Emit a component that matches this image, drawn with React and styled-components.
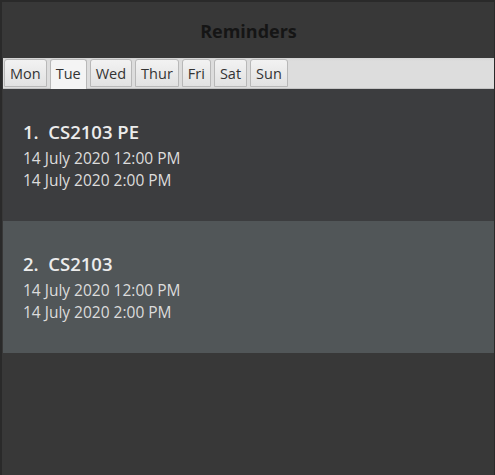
import styled, { createGlobalStyle } from "styled-components";
import { useState } from "react";

const GlobalStyle = createGlobalStyle`
  html, body {
    margin: 0;
    padding: 0;
    background: #383838;
  }
  #root {
    height: 475px;
  }
`;

const Window = styled.div`
  box-sizing: border-box;
  height: 475px;
  width: 495px;
  display: flex;
  flex-direction: column;
  background: #383838;
  border-left: 2px solid #2a2a2a;
  border-top: 2px solid #2a2a2a;
  border-right: 1px solid #2a2a2a;
  padding-left: 1px;
  font-family: "Open Sans", "Noto Sans", sans-serif;
`;

const Title = styled.div`
  height: 56px;
  padding-top: 2px;
  box-sizing: border-box;
  display: flex;
  align-items: center;
  justify-content: center;
  font-size: 18px;
  font-weight: 700;
  color: #151515;
`;

const TabBar = styled.div`
  height: 31px;
  box-sizing: border-box;
  display: flex;
  align-items: flex-end;
  gap: 3px;
  padding: 0 0 1px 1px;
  background: linear-gradient(#d4d4d4, #dddddd 3px);
  border-bottom: 1px solid #c4c4c4;
`;

const Tab = styled.button`
  box-sizing: border-box;
  height: ${(p) => (p.$active ? "30px" : "28px")};
  margin-bottom: ${(p) => (p.$active ? "-2px" : "0")};
  padding: ${(p) => (p.$active ? "0 5px 2px" : "0 5px")};
  font-family: "Open Sans", "Noto Sans", sans-serif;
  font-size: 14.5px;
  color: #333;
  border: 1px solid #b8b8b8;
  border-bottom: ${(p) => (p.$active ? "none" : "1px solid #b8b8b8")};
  border-radius: 3px 3px 0 0;
  background: ${(p) =>
    p.$active ? "#f4f4f4" : "linear-gradient(#f2f2f2, #e2e2e2)"};
  cursor: pointer;
  outline: none;
`;

const List = styled.div`
  display: flex;
  flex-direction: column;
`;

const Card = styled.div`
  height: 132px;
  box-sizing: border-box;
  padding: 30px 20px 0;
  background: ${(p) => (p.$odd ? "#515658" : "#3c3d3f")};
  color: #e4e4e4;
`;

const CardTitle = styled.div`
  font-size: 18.5px;
  font-weight: 600;
  line-height: 26px;
  white-space: pre;
  color: #ececec;
`;

const Line = styled.div`
  font-size: 15.5px;
  line-height: 22px;
  color: #dcdcdc;
  &:first-of-type {
    margin-top: 2px;
  }
`;

const days = ["Mon", "Tue", "Wed", "Thur", "Fri", "Sat", "Sun"];

const reminders = [
  { title: "CS2103 PE", start: "14 July 2020 12:00 PM", end: "14 July 2020 2:00 PM" },
  { title: "CS2103", start: "14 July 2020 12:00 PM", end: "14 July 2020 2:00 PM" },
];

function App() {
  const [day, setDay] = useState("Tue");

  return (
    <>
      <GlobalStyle />
      <Window>
        <Title>Reminders</Title>
        <TabBar>
          {days.map((d) => (
            <Tab key={d} $active={d === day} onClick={() => setDay(d)}>
              {d}
            </Tab>
          ))}
        </TabBar>
        <List>
          {reminders.map((r, i) => (
            <Card key={i} $odd={i % 2 === 1}>
              <CardTitle>{`${i + 1}.  ${r.title}`}</CardTitle>
              <div>
                <Line>{r.start}</Line>
                <Line>{r.end}</Line>
              </div>
            </Card>
          ))}
        </List>
      </Window>
    </>
  );
}

export default App;
